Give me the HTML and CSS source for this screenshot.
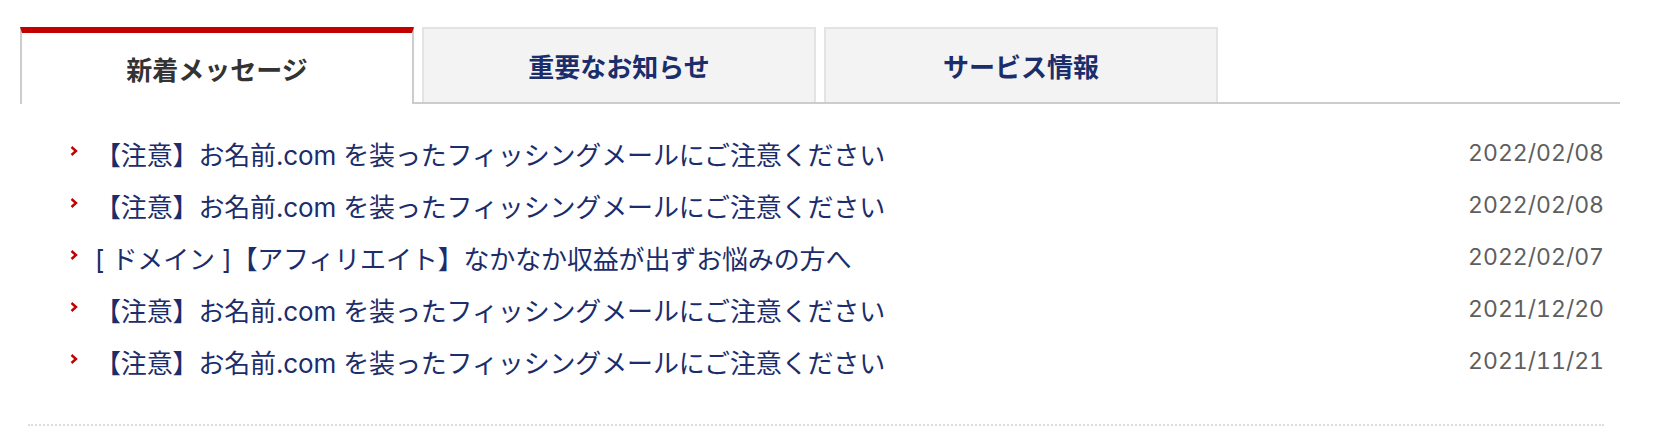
FILE: index.html
```html
<!DOCTYPE html>
<html lang="ja">
<head>
<meta charset="utf-8">
<title>お知らせ</title>
<link rel="stylesheet" href="styles.css">
</head>
<body>
<div class="news">
  <div class="tabs">
    <div class="tab tab-active">新着メッセージ</div>
    <div class="tab">重要なお知らせ</div>
    <div class="tab">サービス情報</div>
  </div>
  <ul class="list">
    <li class="row">
      <svg class="chev" viewBox="0 0 8 10" width="8" height="10"><polyline points="1.5,1 6,5 1.5,9" /></svg>
      <span class="title">【注意】お名前.com を装ったフィッシングメールにご注意ください</span>
      <span class="date">2022/02/08</span>
    </li>
    <li class="row">
      <svg class="chev" viewBox="0 0 8 10" width="8" height="10"><polyline points="1.5,1 6,5 1.5,9" /></svg>
      <span class="title">【注意】お名前.com を装ったフィッシングメールにご注意ください</span>
      <span class="date">2022/02/08</span>
    </li>
    <li class="row">
      <svg class="chev" viewBox="0 0 8 10" width="8" height="10"><polyline points="1.5,1 6,5 1.5,9" /></svg>
      <span class="title">[ ドメイン ]【アフィリエイト】なかなか収益が出ずお悩みの方へ</span>
      <span class="date">2022/02/07</span>
    </li>
    <li class="row">
      <svg class="chev" viewBox="0 0 8 10" width="8" height="10"><polyline points="1.5,1 6,5 1.5,9" /></svg>
      <span class="title">【注意】お名前.com を装ったフィッシングメールにご注意ください</span>
      <span class="date">2021/12/20</span>
    </li>
    <li class="row">
      <svg class="chev" viewBox="0 0 8 10" width="8" height="10"><polyline points="1.5,1 6,5 1.5,9" /></svg>
      <span class="title">【注意】お名前.com を装ったフィッシングメールにご注意ください</span>
      <span class="date">2021/11/21</span>
    </li>
  </ul>
</div>
</body>
</html>
```

FILE: styles.css
```css
* { box-sizing: border-box; }

body {
  margin: 0;
  background: #fff;
  font-family: "Inter", "Noto Sans CJK JP", sans-serif;
}

.news {
  width: 1600px;
  margin: 27px 0 0 20px;
}

.tabs {
  display: flex;
  gap: 8px;
  border-bottom: 2px solid #cccccc;
  height: 77px;
  align-items: flex-start;
}

.tab {
  width: 394px;
  height: 75px;
  display: flex;
  align-items: center;
  justify-content: center;
  background: #f3f3f3;
  border: 2px solid #e3e3e3;
  border-bottom: none;
  font-family: "Noto Sans CJK JP", sans-serif;
  font-weight: 700;
  font-size: 26px;
  color: #1b2d6b;
}

.tab-active {
  height: 77px;
  background: #fff;
  border-top: 6px solid #c30000;
  border-left: 2px solid #cccccc;
  border-right: 2px solid #cccccc;
  color: #333333;
}

.list {
  list-style: none;
  margin: 23px 16px 0 8px;
  padding: 0 0 37px 0;
  border-bottom: 2px dotted #dddddd;
}

.row {
  display: flex;
  align-items: center;
  height: 52px;
}

.chev {
  margin-left: 42px;
  margin-right: 17px;
  flex: none;
  position: relative;
  top: -2px;
}

.chev polyline {
  fill: none;
  stroke: #c30000;
  stroke-width: 2.4;
}

.title {
  flex: 1;
  font-size: 26px;
  letter-spacing: -0.15px;
  color: #1b2d6b;
  white-space: nowrap;
}

.date {
  font-size: 23px;
  font-variant-numeric: tabular-nums;
  letter-spacing: 0;
  color: #5e5e5e;
}
```
